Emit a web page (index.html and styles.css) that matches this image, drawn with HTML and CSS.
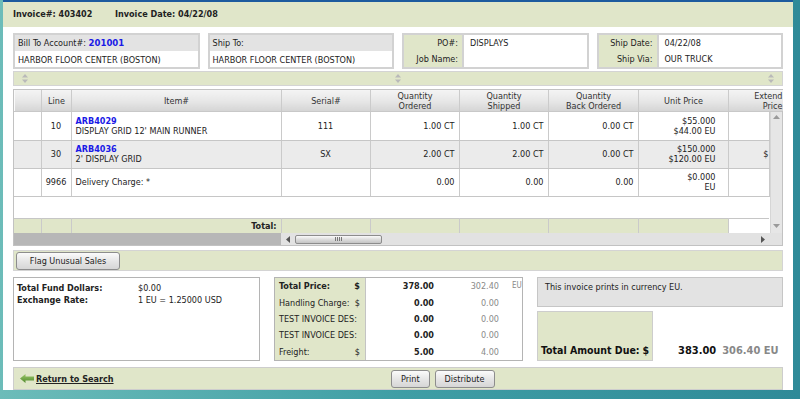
FILE: index.html
```html
<!DOCTYPE html>
<html>
<head>
<meta charset="utf-8">
<title>Invoice 403402</title>
<link rel="stylesheet" href="styles.css">
</head>
<body>
<div class="win">
  <div class="titlebar"></div>
  <div class="inv-head">
    <span class="inv-no">Invoice#: 403402</span>
    <span>Invoice Date: 04/22/08</span>
  </div>

  <div class="content">
    <!-- account / shipping info -->
    <div class="info">
      <div class="box stack">
        <div class="box-top">Bill To Account#: <a class="acct" href="#">201001</a></div>
        <div class="box-body">HARBOR FLOOR CENTER (BOSTON)</div>
      </div>
      <div class="box stack">
        <div class="box-top">Ship To:</div>
        <div class="box-body">HARBOR FLOOR CENTER (BOSTON)</div>
      </div>
      <div class="box pairs">
        <div class="lbl">PO#:</div><div class="val">DISPLAYS</div>
        <div class="lbl">Job Name:</div><div class="val"></div>
      </div>
      <div class="box pairs">
        <div class="lbl">Ship Date:</div><div class="val">04/22/08</div>
        <div class="lbl">Ship Via:</div><div class="val">OUR TRUCK</div>
      </div>
    </div>

    <div class="splitter">
      <svg class="grip" width="6" height="9" viewBox="0 0 6 9"><path d="M3 0 L6 3.5 H0 Z M3 9 L6 5.5 H0 Z" fill="#b9b9b9"/></svg>
      <svg class="grip" width="6" height="9" viewBox="0 0 6 9"><path d="M3 0 L6 3.5 H0 Z M3 9 L6 5.5 H0 Z" fill="#b9b9b9"/></svg>
      <svg class="grip" width="6" height="9" viewBox="0 0 6 9"><path d="M3 0 L6 3.5 H0 Z M3 9 L6 5.5 H0 Z" fill="#b9b9b9"/></svg>
    </div>

    <!-- line items grid -->
    <div class="grid">
      <table class="cols head">
        <colgroup>
          <col class="c-sel"><col class="c-line"><col class="c-item"><col class="c-num"><col class="c-num"><col class="c-num"><col class="c-num2"><col class="c-num2"><col class="c-ext">
        </colgroup>
        <tr>
          <th></th><th>Line</th><th>Item#</th><th>Serial#</th>
          <th>Quantity<br>Ordered</th><th>Quantity<br>Shipped</th><th>Quantity<br>Back Ordered</th>
          <th>Unit Price</th><th class="ext">Extend<br>Price</th>
        </tr>
      </table>

      <div class="gbody">
        <div class="rows">
          <table class="cols data">
            <colgroup>
              <col class="c-sel"><col class="c-line"><col class="c-item"><col class="c-num"><col class="c-num"><col class="c-num"><col class="c-num2"><col class="c-num2"><col class="c-ext2">
            </colgroup>
            <tr>
              <td></td><td class="c">10</td>
              <td><a class="sku" href="#">ARB4029</a><br>DISPLAY GRID 12' MAIN RUNNER</td>
              <td class="c">111</td>
              <td class="r">1.00 CT</td><td class="r">1.00 CT</td><td class="r">0.00 CT</td>
              <td class="r price">$55.000<br>$44.00 EU</td><td></td>
            </tr>
            <tr class="alt">
              <td></td><td class="c">30</td>
              <td><a class="sku" href="#">ARB4036</a><br>2' DISPLAY GRID</td>
              <td class="c">SX</td>
              <td class="r">2.00 CT</td><td class="r">2.00 CT</td><td class="r">0.00 CT</td>
              <td class="r price">$150.000<br>$120.00 EU</td><td class="r peek">$</td>
            </tr>
            <tr>
              <td></td><td class="c">9966</td>
              <td>Delivery Charge: *</td>
              <td></td>
              <td class="r">0.00</td><td class="r">0.00</td><td class="r">0.00</td>
              <td class="r price">$0.000<br>EU</td><td></td>
            </tr>
          </table>
          <div class="filler"></div>
          <table class="cols total">
            <colgroup>
              <col class="c-sel"><col class="c-line"><col class="c-item"><col class="c-num"><col class="c-num"><col class="c-num"><col class="c-num2"><col class="c-num2"><col class="c-ext2">
            </colgroup>
            <tr>
              <td></td><td></td><td class="r b">Total:</td><td></td><td></td><td></td><td></td><td></td><td class="blank"></td>
            </tr>
          </table>
        </div>
        <div class="vscroll">
          <svg width="7" height="4" viewBox="0 0 7 4"><path d="M3.5 0 L7 4 H0 Z" fill="#9a9a9a"/></svg>
          <svg width="7" height="4" viewBox="0 0 7 4"><path d="M3.5 4 L7 0 H0 Z" fill="#9a9a9a"/></svg>
        </div>
      </div>

      <div class="hscroll">
        <div class="frozen"></div>
        <div class="track">
          <svg class="arr" width="4" height="7" viewBox="0 0 4 7"><path d="M0 3.5 L4 0 V7 Z" fill="#555"/></svg>
          <div class="thumb"><span></span><span></span><span></span><span></span></div>
          <svg class="arr right" width="4" height="7" viewBox="0 0 4 7"><path d="M4 3.5 L0 0 V7 Z" fill="#555"/></svg>
        </div>
        <div class="corner"></div>
      </div>
    </div>

    <div class="flagbar">
      <button class="btn">Flag Unusual Sales</button>
    </div>

    <!-- totals -->
    <div class="summary">
      <div class="fund">
        <div class="kv"><b>Total Fund Dollars:</b><span>$0.00</span></div>
        <div class="kv"><b>Exchange Rate:</b><span>1 EU = 1.25000 USD</span></div>
      </div>

      <div class="totals">
        <div class="tl b">Total Price:<span>$</span></div><div class="v1 b">378.00</div><div class="v2">302.40</div><div class="cur">EU</div>
        <div class="tl">Handling Charge:<span>$</span></div><div class="v1">0.00</div><div class="v2">0.00</div><div class="cur"></div>
        <div class="tl">TEST INVOICE DES:</div><div class="v1">0.00</div><div class="v2">0.00</div><div class="cur"></div>
        <div class="tl">TEST INVOICE DES:</div><div class="v1">0.00</div><div class="v2">0.00</div><div class="cur"></div>
        <div class="tl">Freight:<span>$</span></div><div class="v1">5.00</div><div class="v2">4.00</div><div class="cur"></div>
      </div>

      <div class="due-col">
        <div class="note">This invoice prints in currency EU.</div>
        <div class="due">
          <div class="due-lbl">Total Amount Due:<span>$</span></div>
          <span class="due-usd">383.00</span>
          <span class="due-eu">306.40 EU</span>
        </div>
      </div>
    </div>

    <div class="footer">
      <a class="back" href="#">
        <svg width="14" height="9" viewBox="0 0 14 9">
          <defs><linearGradient id="ag" x1="0" y1="0" x2="0" y2="1"><stop offset="0" stop-color="#9cc76a"/><stop offset="1" stop-color="#4f8a2c"/></linearGradient></defs>
          <path d="M0 4.5 L5.5 0 V2.5 H14 V6.5 H5.5 V9 Z" fill="url(#ag)"/>
        </svg>Return to Search</a>
      <div class="actions">
        <button class="btn">Print</button>
        <button class="btn">Distribute</button>
      </div>
    </div>
  </div>
</div>
</body>
</html>
```

FILE: styles.css
```css
* { box-sizing: border-box; }

html, body { margin: 0; height: 100%; }

body {
  background: linear-gradient(90deg, #6cbcb9, #3f9ea5 50%, #2f8a98);
  font-family: "DejaVu Sans Condensed", "Liberation Sans Narrow", "DejaVu Sans", sans-serif;
  font-stretch: condensed;
  font-size: 9px;
  line-height: 10px;
  color: #222;
  overflow: hidden;
}

.win { margin: 0 7px 0 3px; height: 390px; background: #fff; display: flex; flex-direction: column; }
.titlebar { height: 2px; background: #1d5b9e; }

.inv-head { height: 26px; background: #e0e6c9; display: flex; align-items: center; padding: 0 10px; font-weight: bold; font-size: 9px; }
.inv-no { width: 102px; }

.content { padding: 6px 10px 0; display: flex; flex-direction: column; }

a { color: #1a1ae6; text-decoration: none; font-weight: bold; }

/* info boxes */
.info { display: grid; grid-template-columns: repeat(4, 1fr); gap: 8px; height: 36px; }
.box { border: 2px solid #d2d2d2; background: #fff; }
.stack { display: flex; flex-direction: column; }
.box-top { background: #e3e3e3; height: 16px; padding: 3px 3px 0; }
.acct { font-size: 9.5px; }
.box-body { padding: 4px 3px 0; }
.pairs { display: grid; grid-template-columns: 60px 1fr; grid-template-rows: 1fr 1fr; }
.pairs .lbl { background: #e0e6c9; text-align: right; padding-right: 4px; border-right: 2px solid #d2d2d2; display: flex; align-items: center; justify-content: flex-end; }
.pairs .val { padding-left: 6px; display: flex; align-items: center; }

.splitter { margin-top: 2px; height: 15px; border: 1px solid #d4d4d4; background: #e0e6c9; display: flex; align-items: center; justify-content: space-between; padding: 0 8px; }

/* grid */
.grid { margin-top: 3px; border: 1px solid #c2c2c2; }
table.cols { border-collapse: collapse; table-layout: fixed; }
table.head { width: 768px; }
table.data, table.total { width: 755px; }
.c-sel { width: 27px; }
.c-line { width: 30px; }
.c-item { width: 210px; }
.c-num { width: 89px; }
.c-num2 { width: 90px; }
.c-ext { width: 54px; }
.c-ext2 { width: 41px; }

.head th { height: 21px; padding: 0 2px; font-weight: normal; color: #333; background: linear-gradient(#f4f4f4, #e6e6e6 55%, #d5d5d5); border-right: 1px solid #cbcbcb; border-left: 1px solid #fbfbfb; overflow: hidden; white-space: nowrap; }
.head th.ext { text-align: right; padding-right: 0; border-right: 0; }

.gbody { display: flex; height: 122px; border-top: 1px solid #c8c8c8; }
.rows { flex: 1; display: flex; flex-direction: column; }
.data td { height: 28px; padding: 0 4px; border-right: 1px solid #cacaca; border-bottom: 1px solid #c6c6c6; white-space: nowrap; overflow: hidden; }
.data tr.alt td { background: #ebebeb; }
.data td.price { padding-right: 12px; }
.data td.peek { padding-right: 0; }
.filler { flex: 1; }
.total td { height: 15px; background: #e0e6c9; border-right: 1px solid #cacaca; border-top: 1px solid #c6c6c6; padding: 0 4px; }
.total td.blank { background: #fff; border-right: 0; }
.c { text-align: center; }
.r { text-align: right; }
.b { font-weight: bold; }

.vscroll { width: 13px; background: #e6e6e6; border-left: 1px solid #d6d6d6; display: flex; flex-direction: column; justify-content: space-between; align-items: center; padding: 3px 0 5px; }

.hscroll { display: flex; height: 12px; }
.frozen { width: 267px; background: #b7b7b7; }
.track { flex: 1; background: #e2e2e2; display: flex; align-items: center; padding: 0 4px 0 5px; }
.arr.right { margin-left: auto; }
.thumb { margin-left: 5px; width: 87px; height: 9px; border: 1px solid #8c8c8c; border-radius: 2px; background: linear-gradient(#fafafa, #dcdcdc 50%, #c4c4c4); display: flex; justify-content: center; align-items: center; gap: 1px; }
.thumb span { width: 1px; height: 4px; background: #777; }
.corner { width: 13px; background: #e2e2e2; }

/* flag bar */
.flagbar { margin-top: 4px; height: 21px; background: #e0e6c9; border: 1px solid #d4d4d4; padding: 1px 2px; display: flex; align-items: center; }
.btn { font: inherit; color: #222; height: 18px; padding: 0 8px; border: 1px solid #8d8d8d; border-radius: 3px; background: linear-gradient(#fbfbfb, #e6e6e6 50%, #d6d6d6); }
.flagbar .btn { width: 104px; }

/* summary */
.summary { margin-top: 6px; height: 84px; display: grid; grid-template-columns: 247px 249px 246px; justify-content: space-between; }
.fund { border: 1px solid #b4b4b4; padding: 4px 3px; }
.kv { display: grid; grid-template-columns: 121px 1fr; line-height: 12px; }

.totals { border: 1px solid #b4b4b4; display: grid; grid-template-columns: 91px 68px 65px 1fr; grid-template-rows: repeat(5, 1fr); align-items: stretch; }
.totals > div { display: flex; align-items: center; }
.tl { background: #e0e6c9; border-right: 1px solid #c4c4c4; padding: 0 5px 0 4px; justify-content: space-between; }
.v1 { justify-content: flex-end; font-weight: bold; }
.v2 { justify-content: flex-end; color: #8a8a8a; }
.cur { padding-left: 13px; color: #8a8a8a; font-size: 8px; }

.due-col { display: flex; flex-direction: column; gap: 4px; }
.note { height: 30px; background: #e3e3e3; border: 1px solid #c6c6c6; padding: 4px 7px; }
.due { flex: 1; display: flex; align-items: flex-end; white-space: nowrap; }
.due-lbl { flex: none; width: 116px; height: 50px; background: #e0e6c9; border: 1px solid #cdcdcd; display: flex; align-items: flex-end; justify-content: space-between; padding: 0 3px 4px; font-weight: bold; font-size: 10.5px; line-height: 12px; color: #111; }
.due-usd, .due-eu { font-weight: bold; font-size: 11px; line-height: 12px; padding-bottom: 4px; }
.due-usd { margin-left: 25px; color: #111; }
.due-eu { margin-left: 6px; color: #888; }

/* footer */
.footer { margin-top: 6px; height: 23px; background: #e0e6c9; border: 1px solid #cdcdcd; display: grid; grid-template-columns: 371px auto; align-items: center; padding-left: 6px; }
.back { color: #222; text-decoration: underline; display: flex; align-items: center; gap: 2px; }
.actions { display: flex; gap: 5px; }
.actions .btn { padding: 0 9px; }
```
